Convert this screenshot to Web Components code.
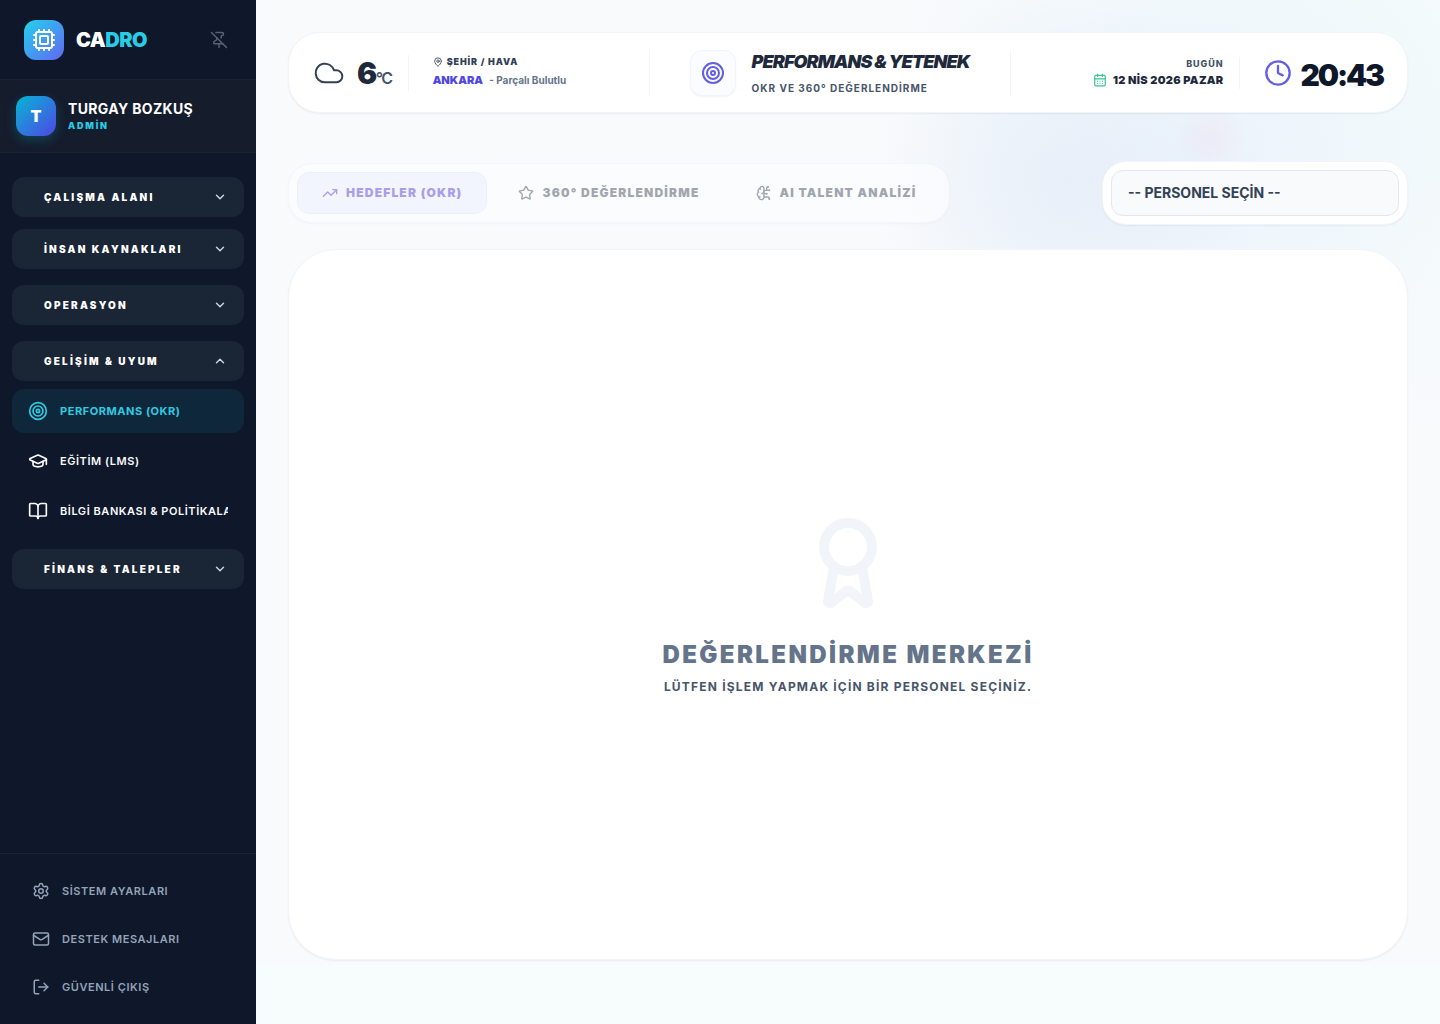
<!DOCTYPE html>
<html lang="tr">
<head>
<meta charset="UTF-8">
<meta name="viewport" content="width=device-width, initial-scale=1">
<title>CADRO</title>
<style>
    :root {
        --slate-50: #f8fafc;
        --slate-100: #f1f5f9;
        --slate-400: #94a3b8;
        --slate-500: #64748b;
        --slate-600: #475569;
        --slate-700: #334155;
        --slate-800: #1e293b;
        --slate-900: #0f172a;
        --indigo: #4f46e5;
        --indigo-soft: #625fe0;
        --cyan: #28cce4;
        --tight: -0.05em;
        --wide: 0.05em;
        --wider: 0.1em;
        --widest: 0.2em;
    }
    body {
        margin: 0;
        font-family: Inter, "Noto Sans", sans-serif;
        background: var(--slate-50);
        color: var(--slate-800);
    }
</style>
</head>
<body>
<cadro-app>
    <cadro-sidebar slot="sidebar">
        <nav-group label="ÇALIŞMA ALANI"></nav-group>
        <nav-group label="İNSAN KAYNAKLARI"></nav-group>
        <nav-group label="OPERASYON"></nav-group>
        <nav-group label="GELİŞİM &amp; UYUM" open>
            <nav-item icon="target" active>PERFORMANS (OKR)</nav-item>
            <nav-item icon="cap">EĞİTİM (LMS)</nav-item>
            <nav-item icon="book">BİLGİ BANKASI &amp; POLİTİKALAR</nav-item>
        </nav-group>
        <nav-group label="FİNANS &amp; TALEPLER"></nav-group>
        <nav-item slot="footer" icon="settings" muted>SİSTEM AYARLARI</nav-item>
        <nav-item slot="footer" icon="mail" muted>DESTEK MESAJLARI</nav-item>
        <nav-item slot="footer" icon="logout" muted>GÜVENLİ ÇIKIŞ</nav-item>
    </cadro-sidebar>

    <page-header>
        <weather-info slot="start"></weather-info>
        <page-title>
            <span slot="title">PERFORMANS &amp; YETENEK</span>
            <span slot="subtitle">OKR VE 360° DEĞERLENDİRME</span>
        </page-title>
        <date-clock slot="end"></date-clock>
    </page-header>

    <page-toolbar>
        <tab-bar>
            <tab-button icon="trending" active>HEDEFLER (OKR)</tab-button>
            <tab-button icon="star">360° DEĞERLENDİRME</tab-button>
            <tab-button icon="brain">AI TALENT ANALİZİ</tab-button>
        </tab-bar>
        <personnel-select></personnel-select>
    </page-toolbar>

    <empty-state>
        <span slot="title">DEĞERLENDİRME MERKEZİ</span>
        <span slot="text">LÜTFEN İŞLEM YAPMAK İÇİN BİR PERSONEL SEÇİNİZ.</span>
    </empty-state>
</cadro-app>

<script>
const ICONS = {
    cpu: '<path d="M12 20v2M12 2v2M17 20v2M17 2v2M2 12h2M2 17h2M2 7h2M20 12h2M20 17h2M20 7h2M7 20v2M7 2v2"/><rect x="4" y="4" width="16" height="16" rx="2"/><rect x="8" y="8" width="8" height="8" rx="1"/>',
    pinOff: '<path d="M12 17v5"/><path d="M15 9.34V7a1 1 0 0 1 1-1 2 2 0 0 0 0-4H7.89"/><path d="m2 2 20 20"/><path d="M9 9v1.76a2 2 0 0 1-1.11 1.79l-1.78.9A2 2 0 0 0 5 15.24V16a1 1 0 0 0 1 1h11"/>',
    down: '<path d="m6 9 6 6 6-6"/>',
    up: '<path d="m18 15-6-6-6 6"/>',
    target: '<circle cx="12" cy="12" r="10"/><circle cx="12" cy="12" r="6"/><circle cx="12" cy="12" r="2"/>',
    cap: '<path d="M21.42 10.922a1 1 0 0 0-.019-1.838L12.83 5.18a2 2 0 0 0-1.66 0L2.6 9.08a1 1 0 0 0 0 1.832l8.57 3.908a2 2 0 0 0 1.66 0z"/><path d="M22 10v6"/><path d="M6 12.5V16a6 3 0 0 0 12 0v-3.5"/>',
    book: '<path d="M12 7v14"/><path d="M3 18a1 1 0 0 1-1-1V4a1 1 0 0 1 1-1h5a4 4 0 0 1 4 4 4 4 0 0 1 4-4h5a1 1 0 0 1 1 1v13a1 1 0 0 1-1 1h-6a3 3 0 0 0-3 3 3 3 0 0 0-3-3z"/>',
    settings: '<path d="M9.671 4.136a2.34 2.34 0 0 1 4.659 0 2.34 2.34 0 0 0 3.319 1.915 2.34 2.34 0 0 1 2.33 4.033 2.34 2.34 0 0 0 0 3.831 2.34 2.34 0 0 1-2.33 4.033 2.34 2.34 0 0 0-3.319 1.915 2.34 2.34 0 0 1-4.659 0 2.34 2.34 0 0 0-3.32-1.915 2.34 2.34 0 0 1-2.33-4.033 2.34 2.34 0 0 0 0-3.831A2.34 2.34 0 0 1 6.35 6.051a2.34 2.34 0 0 0 3.319-1.915"/><circle cx="12" cy="12" r="3"/>',
    mail: '<path d="m22 7-8.991 5.727a2 2 0 0 1-2.009 0L2 7"/><rect x="2" y="4" width="20" height="16" rx="2"/>',
    logout: '<path d="m16 17 5-5-5-5"/><path d="M21 12H9"/><path d="M9 21H5a2 2 0 0 1-2-2V5a2 2 0 0 1 2-2h4"/>',
    cloud: '<path d="M17.5 19H9a7 7 0 1 1 6.71-9h1.79a4.5 4.5 0 1 1 0 9Z"/>',
    mapPin: '<path d="M20 10c0 4.993-5.539 10.193-7.399 11.799a1 1 0 0 1-1.202 0C9.539 20.193 4 14.993 4 10a8 8 0 0 1 16 0"/><circle cx="12" cy="10" r="3"/>',
    calendar: '<path d="M8 2v4M16 2v4"/><rect x="3" y="4" width="18" height="18" rx="2"/><path d="M3 10h18M8 14h.01M12 14h.01M16 14h.01M8 18h.01M12 18h.01M16 18h.01"/>',
    clock: '<circle cx="12" cy="12" r="10"/><path d="M12 6v6l4 2"/>',
    trending: '<path d="M16 7h6v6"/><path d="m22 7-8.5 8.5-5-5L2 17"/>',
    star: '<path d="M11.525 2.295a.53.53 0 0 1 .95 0l2.31 4.679a2.123 2.123 0 0 0 1.595 1.16l5.166.756a.53.53 0 0 1 .294.904l-3.736 3.638a2.123 2.123 0 0 0-.611 1.878l.882 5.14a.53.53 0 0 1-.771.56l-4.618-2.428a2.122 2.122 0 0 0-1.973 0L6.396 21.01a.53.53 0 0 1-.77-.56l.881-5.139a2.122 2.122 0 0 0-.611-1.879L2.16 9.795a.53.53 0 0 1 .294-.906l5.165-.755a2.122 2.122 0 0 0 1.597-1.16z"/>',
    brain: '<path d="M12 5a3 3 0 1 0-5.997.125 4 4 0 0 0-2.526 5.77 4 4 0 0 0 .556 6.588A4 4 0 1 0 12 18Z"/><path d="M9 13a4.5 4.5 0 0 0 3-4"/><path d="M6.003 5.125A3 3 0 0 0 6.401 6.5"/><path d="M3.477 10.896a4 4 0 0 1 .585-.396"/><path d="M6 18a4 4 0 0 1-1.967-.516"/><path d="M12 13h4"/><path d="M12 18h6a2 2 0 0 1 2 2v1"/><path d="M12 8h8"/><path d="M16 8V5a2 2 0 0 1 2-2"/><circle cx="16" cy="13" r=".5"/><circle cx="18" cy="3" r=".5"/><circle cx="20" cy="21" r=".5"/><circle cx="20" cy="8" r=".5"/>',
    award: '<path d="m15.477 12.89 1.515 8.526a.5.5 0 0 1-.81.47l-3.58-2.687a1 1 0 0 0-1.197 0l-3.586 2.686a.5.5 0 0 1-.81-.469l1.514-8.526"/><circle cx="12" cy="8" r="6"/>'
};

// Base: cada componente solo define su view()
class CadroElement extends HTMLElement {
    constructor() {
        super();
        this.attachShadow({ mode: 'open' });
    }

    connectedCallback() {
        this.shadowRoot.innerHTML = this.view();
    }
}

class UiIcon extends CadroElement {
    view() {
        const size = this.getAttribute('size') || 20;
        const stroke = this.getAttribute('stroke') || 2;
        return `
            <style>
                :host { display: inline-flex; flex: none; }
                svg { display: block; }
            </style>
            <svg width="${size}" height="${size}" viewBox="0 0 24 24" fill="none" stroke="currentColor"
                stroke-width="${stroke}" stroke-linecap="round" stroke-linejoin="round" aria-hidden="true">
                ${ICONS[this.getAttribute('name')]}
            </svg>
        `;
    }
}

class CadroApp extends CadroElement {
    view() {
        return `
            <style>
                :host { display: grid; grid-template-columns: 256px 1fr; min-height: 100vh; }
                main {
                    display: flex;
                    flex-direction: column;
                    padding: 32px 32px 64px;
                    background:
                        radial-gradient(circle at 956px 138px, rgba(240,205,230,.22), transparent 36px),
                        radial-gradient(ellipse 190px 190px at 810px 180px, rgba(222,231,245,.45), transparent),
                        radial-gradient(ellipse 300px 260px at 930px 160px, rgba(226,236,252,.5), transparent),
                        radial-gradient(ellipse 420px 360px at 1060px 80px, rgba(238,251,251,.6), transparent),
                        linear-gradient(to top, #f7fdfd 58px, transparent 60px),
                        var(--slate-50);
                }
            </style>
            <slot name="sidebar"></slot>
            <main><slot></slot></main>
        `;
    }
}

class CadroSidebar extends CadroElement {
    view() {
        return `
            <style>
                :host {
                    display: flex;
                    flex-direction: column;
                    background: var(--slate-900);
                    color: #fff;
                }
                .brand, .user { display: flex; align-items: center; gap: 12px; }
                .brand { padding: 20px 24px 19px; border-bottom: 1px solid #1a2333; }
                .user { padding: 16px; background: #151c2c; border-bottom: 1px solid #1a2436; }
                .logo, .avatar {
                    display: grid;
                    place-items: center;
                    width: 40px;
                    height: 40px;
                    border-radius: 12px;
                }
                .logo { background: linear-gradient(135deg, #22d3ee, #6366f1); }
                .avatar {
                    background: linear-gradient(135deg, #06b6d4, #4f46e5);
                    box-shadow: 0 4px 12px rgba(6,182,212,.25);
                    font-size: 16px;
                    font-weight: 900;
                }
                .name { flex: 1; font-size: 20px; line-height: 28px; font-weight: 900; letter-spacing: -0.025em; }
                .name span { color: var(--cyan); }
                button {
                    display: flex;
                    padding: 4px;
                    border: 0;
                    background: none;
                    color: #566176;
                }
                .who { font-size: 14px; line-height: 20px; font-weight: 700; letter-spacing: .025em; }
                .role {
                    font-size: 9px;
                    line-height: 14px;
                    font-weight: 900;
                    letter-spacing: var(--widest);
                    color: var(--cyan);
                }
                nav { flex: 1; padding: 24px 12px; }
                footer {
                    display: flex;
                    flex-direction: column;
                    gap: 6px;
                    padding: 16px;
                    border-top: 1px solid #1a2436;
                }
            </style>
            <div class="brand">
                <div class="logo"><ui-icon name="cpu" size="24"></ui-icon></div>
                <div class="name">CA<span>DRO</span></div>
                <button type="button" aria-label="Menüyü sabitle"><ui-icon name="pinOff" size="18"></ui-icon></button>
            </div>
            <div class="user">
                <div class="avatar">T</div>
                <div>
                    <div class="who">TURGAY BOZKUŞ</div>
                    <div class="role">ADMİN</div>
                </div>
            </div>
            <nav><slot></slot></nav>
            <footer><slot name="footer"></slot></footer>
        `;
    }
}

class NavGroup extends CadroElement {
    view() {
        const open = this.hasAttribute('open');
        return `
            <style>
                :host { display: block; margin-bottom: 16px; }
                :host(:first-child) { margin-bottom: 12px; }
                button {
                    display: flex;
                    align-items: center;
                    justify-content: space-between;
                    width: 100%;
                    height: 40px;
                    padding: 0 17px 0 32px;
                    border: 0;
                    border-radius: 12px;
                    background: #1a2535;
                    color: #fff;
                    font: 900 10px/16px Inter, sans-serif;
                    letter-spacing: .22em;
                }
                ui-icon { color: #cbd5e1; }
                .items { display: flex; flex-direction: column; gap: 6px; padding-top: 8px; }
            </style>
            <button type="button" aria-expanded="${open}">
                ${this.getAttribute('label').replace('&', '&amp;')}
                <ui-icon name="${open ? 'up' : 'down'}" size="14" stroke="2.5"></ui-icon>
            </button>
            ${open ? '<div class="items"><slot></slot></div>' : ''}
        `;
    }
}

class NavItem extends CadroElement {
    view() {
        const muted = this.hasAttribute('muted');
        return `
            <style>
                :host { display: block; }
                a {
                    display: flex;
                    align-items: center;
                    gap: 12px;
                    height: 44px;
                    padding: 0 16px;
                    border-radius: 12px;
                    color: #f8fafc;
                    font-size: 11px;
                    line-height: 16px;
                    font-weight: 600;
                    letter-spacing: var(--wide);
                    text-decoration: none;
                }
                :host([active]) a { background: #0e273b; color: #2fcbe2; font-weight: 700; }
                :host([muted]) a { height: 42px; color: var(--slate-400); }
                .label { min-width: 0; overflow: hidden; white-space: nowrap; }
            </style>
            <a href="#"><ui-icon name="${this.getAttribute('icon')}" size="${muted ? 18 : 20}"></ui-icon><span class="label"><slot></slot></span></a>
        `;
    }
}

class PageHeader extends CadroElement {
    view() {
        return `
            <style>
                :host {
                    display: flex;
                    align-items: center;
                    box-sizing: border-box;
                    min-height: 81px;
                    padding: 0 24px;
                    margin-bottom: 48px;
                    border: 1px solid var(--slate-100);
                    border-radius: 32px;
                    background: #fff;
                    box-shadow: 0 1px 2px rgba(15,23,42,.06);
                }
                .start, .end { flex: 1 1 auto; display: flex; }
                .end { justify-content: flex-end; }
                .middle {
                    padding: 0 40px;
                    border: solid var(--slate-100);
                    border-width: 0 1px;
                }
            </style>
            <div class="start"><slot name="start"></slot></div>
            <div class="middle"><slot></slot></div>
            <div class="end"><slot name="end"></slot></div>
        `;
    }
}

class WeatherInfo extends CadroElement {
    view() {
        return `
            <style>
                :host { display: flex; align-items: center; }
                .now {
                    display: flex;
                    align-items: center;
                    gap: 12px;
                    padding-right: 16px;
                    border-right: 1px solid var(--slate-100);
                    color: var(--slate-700);
                }
                .temp {
                    color: var(--slate-800);
                    font-size: 30px;
                    line-height: 36px;
                    font-weight: 900;
                    letter-spacing: var(--tight);
                }
                .temp span { font-size: 16px; line-height: 16px; font-weight: 600; color: var(--slate-600); }
                .place { padding-left: 24px; }
                .caption {
                    display: flex;
                    align-items: center;
                    gap: 4px;
                    color: var(--slate-700);
                    font-size: 9px;
                    line-height: 14px;
                    font-weight: 900;
                    letter-spacing: var(--wider);
                }
                .city { font-size: 11px; line-height: 22px; font-weight: 900; color: var(--indigo); }
                .city span { margin-left: 4px; font-size: 10px; font-weight: 700; color: var(--slate-500); }
            </style>
            <div class="now">
                <ui-icon name="cloud" size="32" stroke="1.5"></ui-icon>
                <div class="temp">6<span>°C</span></div>
            </div>
            <div class="place">
                <div class="caption"><ui-icon name="mapPin" size="10"></ui-icon>ŞEHİR / HAVA</div>
                <div class="city">ANKARA <span>- Parçalı Bulutlu</span></div>
            </div>
        `;
    }
}

class PageTitle extends CadroElement {
    view() {
        return `
            <style>
                :host { display: flex; align-items: center; gap: 16px; }
                .badge {
                    display: grid;
                    place-items: center;
                    box-sizing: border-box;
                    width: 46px;
                    height: 46px;
                    border: 1px solid var(--slate-100);
                    border-radius: 12px;
                    background: #fbfcff;
                    box-shadow: 0 1px 2px rgba(15,23,42,.05);
                    color: var(--indigo-soft);
                }
                h1 {
                    margin: 0 0 6px;
                    font-size: 18px;
                    line-height: 24px;
                    font-weight: 900;
                    font-style: italic;
                    letter-spacing: var(--tight);
                    color: var(--slate-800);
                }
                p {
                    margin: 0;
                    font-size: 10px;
                    line-height: 16px;
                    font-weight: 700;
                    letter-spacing: var(--wider);
                    color: var(--slate-600);
                }
            </style>
            <div class="badge"><ui-icon name="target" size="24"></ui-icon></div>
            <div>
                <h1><slot name="title"></slot></h1>
                <p><slot name="subtitle"></slot></p>
            </div>
        `;
    }
}

class DateClock extends CadroElement {
    view() {
        return `
            <style>
                :host { display: flex; align-items: center; }
                .date {
                    padding-right: 16px;
                    border-right: 1px solid var(--slate-100);
                    text-align: right;
                }
                .caption {
                    font-size: 9px;
                    line-height: 14px;
                    font-weight: 800;
                    letter-spacing: var(--wider);
                    color: var(--slate-600);
                }
                .day {
                    display: flex;
                    align-items: center;
                    gap: 6px;
                    font-size: 11px;
                    line-height: 18px;
                    font-weight: 900;
                    letter-spacing: .025em;
                    color: var(--slate-800);
                }
                .day ui-icon { color: #34c48f; }
                .time {
                    display: flex;
                    align-items: center;
                    gap: 8px;
                    padding-left: 24px;
                    color: var(--slate-900);
                    font-size: 30px;
                    line-height: 36px;
                    font-weight: 900;
                    letter-spacing: -0.07em;
                }
                time { padding-top: 4px; }
                .time ui-icon { color: var(--indigo-soft); }
            </style>
            <div class="date">
                <div class="caption">BUGÜN</div>
                <div class="day"><ui-icon name="calendar" size="14"></ui-icon>12 NİS 2026 PAZAR</div>
            </div>
            <div class="time"><ui-icon name="clock" size="28"></ui-icon><time datetime="2026-04-12T20:43">20:43</time></div>
        `;
    }
}

class PageToolbar extends CadroElement {
    view() {
        return `
            <style>
                :host {
                    display: flex;
                    align-items: center;
                    justify-content: space-between;
                    margin-bottom: 24px;
                }
            </style>
            <slot></slot>
        `;
    }
}

class TabBar extends CadroElement {
    view() {
        return `
            <style>
                :host {
                    display: flex;
                    gap: 6px;
                    padding: 8px;
                    border: 1px solid var(--slate-100);
                    border-radius: 24px;
                    background: #fff;
                    box-shadow: 0 1px 2px rgba(15,23,42,.05);
                    opacity: .5;
                }
            </style>
            <slot></slot>
        `;
    }
}

class TabButton extends CadroElement {
    view() {
        return `
            <style>
                :host { display: block; }
                button {
                    display: flex;
                    align-items: center;
                    gap: 8px;
                    height: 42px;
                    padding: 0 24px;
                    border: 1px solid transparent;
                    border-radius: 12px;
                    background: none;
                    color: #4b5563;
                    font: 900 12px/16px Inter, sans-serif;
                    letter-spacing: var(--wider);
                }
                :host([active]) button {
                    background: #eef2ff;
                    border-color: #e0eafb;
                    color: #5b45d8;
                }
            </style>
            <button type="button"><ui-icon name="${this.getAttribute('icon')}" size="16"></ui-icon><slot></slot></button>
        `;
    }
}

class PersonnelSelect extends CadroElement {
    view() {
        return `
            <style>
                :host {
                    display: block;
                    padding: 8px;
                    border: 1px solid var(--slate-100);
                    border-radius: 24px;
                    background: #fff;
                    box-shadow: 0 1px 2px rgba(15,23,42,.05);
                }
                select {
                    display: block;
                    box-sizing: border-box;
                    width: 288px;
                    height: 46px;
                    padding: 0 16px;
                    border: 1px solid #e2e8f0;
                    border-radius: 12px;
                    appearance: none;
                    background: var(--slate-50);
                    color: var(--slate-700);
                    font: 700 14px/20px Inter, sans-serif;
                }
            </style>
            <select aria-label="Personel">
                <option>-- PERSONEL SEÇİN --</option>
            </select>
        `;
    }
}

class EmptyState extends CadroElement {
    view() {
        return `
            <style>
                :host {
                    flex: 1;
                    display: flex;
                    flex-direction: column;
                    align-items: center;
                    justify-content: center;
                    border: 1px solid var(--slate-100);
                    border-radius: 48px;
                    background: #fff;
                    box-shadow: 0 1px 2px rgba(15,23,42,.06);
                    text-align: center;
                }
                ui-icon { color: var(--slate-100); margin-bottom: 28px; }
                h2 {
                    margin: 0 0 8px;
                    font-size: 24px;
                    line-height: 32px;
                    font-weight: 900;
                    letter-spacing: var(--wider);
                    color: var(--slate-500);
                }
                p {
                    margin: 0;
                    font-size: 12px;
                    line-height: 16px;
                    font-weight: 700;
                    letter-spacing: var(--wider);
                    color: var(--slate-600);
                }
            </style>
            <ui-icon name="award" size="96" stroke="2.5"></ui-icon>
            <h2><slot name="title"></slot></h2>
            <p><slot name="text"></slot></p>
        `;
    }
}

customElements.define('ui-icon', UiIcon);
customElements.define('cadro-app', CadroApp);
customElements.define('cadro-sidebar', CadroSidebar);
customElements.define('nav-group', NavGroup);
customElements.define('nav-item', NavItem);
customElements.define('page-header', PageHeader);
customElements.define('weather-info', WeatherInfo);
customElements.define('page-title', PageTitle);
customElements.define('date-clock', DateClock);
customElements.define('page-toolbar', PageToolbar);
customElements.define('tab-bar', TabBar);
customElements.define('tab-button', TabButton);
customElements.define('personnel-select', PersonnelSelect);
customElements.define('empty-state', EmptyState);
</script>
</body>
</html>
